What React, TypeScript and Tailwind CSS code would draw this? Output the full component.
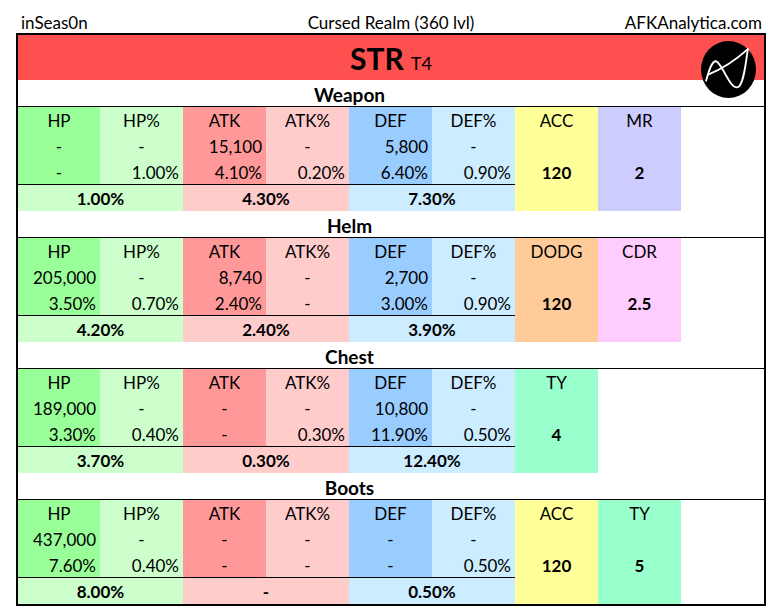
import React from "react";

type Extra = { label: string; value: string; bg: string };
type Section = {
  name: string;
  cols: string[][];
  sums: string[];
  extras: Extra[];
};

const colHeads = ["HP", "HP%", "ATK", "ATK%", "DEF", "DEF%"];
const colBgs = [
  "bg-[#99ff99]",
  "bg-[#ccffcc]",
  "bg-[#ff9999]",
  "bg-[#ffcccc]",
  "bg-[#99ccff]",
  "bg-[#ccecff]",
];
const sumBgs = ["bg-[#ccffcc]", "bg-[#ffcccc]", "bg-[#ccecff]"];

const sections: Section[] = [
  {
    name: "Weapon",
    cols: [
      ["-", "-"],
      ["-", "1.00%"],
      ["15,100", "4.10%"],
      ["-", "0.20%"],
      ["5,800", "6.40%"],
      ["-", "0.90%"],
    ],
    sums: ["1.00%", "4.30%", "7.30%"],
    extras: [
      { label: "ACC", value: "120", bg: "bg-[#ffff99]" },
      { label: "MR", value: "2", bg: "bg-[#ccccff]" },
    ],
  },
  {
    name: "Helm",
    cols: [
      ["205,000", "3.50%"],
      ["-", "0.70%"],
      ["8,740", "2.40%"],
      ["-", "-"],
      ["2,700", "3.00%"],
      ["-", "0.90%"],
    ],
    sums: ["4.20%", "2.40%", "3.90%"],
    extras: [
      { label: "DODG", value: "120", bg: "bg-[#ffcc99]" },
      { label: "CDR", value: "2.5", bg: "bg-[#ffccff]" },
    ],
  },
  {
    name: "Chest",
    cols: [
      ["189,000", "3.30%"],
      ["-", "0.40%"],
      ["-", "-"],
      ["-", "0.30%"],
      ["10,800", "11.90%"],
      ["-", "0.50%"],
    ],
    sums: ["3.70%", "0.30%", "12.40%"],
    extras: [{ label: "TY", value: "4", bg: "bg-[#99ffcc]" }],
  },
  {
    name: "Boots",
    cols: [
      ["437,000", "7.60%"],
      ["-", "0.40%"],
      ["-", "-"],
      ["-", "-"],
      ["-", "-"],
      ["-", "0.50%"],
    ],
    sums: ["8.00%", "-", "0.50%"],
    extras: [
      { label: "ACC", value: "120", bg: "bg-[#ffff99]" },
      { label: "TY", value: "5", bg: "bg-[#99ffcc]" },
    ],
  },
];

function Cell({ v, last }: { v: string; last?: boolean }) {
  return (
    <div
      className={
        "h-[26px] leading-[28px] " +
        (v === "-" ? "text-center " : "text-right pr-[4px] ") +
        (last ? "border-b border-black" : "")
      }
    >
      {v}
    </div>
  );
}

// site logo: black disc with a white looping stroke
function Logo() {
  return (
    <svg width="55" height="57" viewBox="0 0 54 56" className="absolute left-[683px] top-[6px]">
      <ellipse cx="27" cy="28" rx="27" ry="28" fill="#000" />
      <path
        d="M5 39 C 8 28, 11 19, 15 20 C 21 22, 29 50, 37 45 C 42 41, 44 22, 46 8"
        fill="none"
        stroke="#fff"
        strokeWidth="1.8"
        strokeLinecap="round"
      />
      <path
        d="M46 8 C 36 17, 22 27, 7 33"
        fill="none"
        stroke="#fff"
        strokeWidth="1.8"
        strokeLinecap="round"
      />
    </svg>
  );
}

function SectionBlock({ s }: { s: Section }) {
  return (
    <div>
      <div className="h-[27px] border-b border-black">
        <div className="w-[663px] text-center font-bold text-[19px] leading-[29px]">
          {s.name}
        </div>
      </div>
      <div className="flex h-[104px]">
        <div className="w-[497px] flex flex-col">
          <div className="flex">
            {s.cols.map((c, i) => (
              <div
                key={i}
                className={(i === 0 ? "w-[82px] " : "w-[83px] ") + colBgs[i]}
              >
                <div className="h-[26px] leading-[28px] text-center">{colHeads[i]}</div>
                <Cell v={c[0]} />
                <Cell v={c[1]} last />
              </div>
            ))}
          </div>
          <div className="flex h-[26px] font-bold">
            {s.sums.map((v, i) => (
              <div
                key={i}
                className={
                  (i === 0 ? "w-[165px] " : "w-[166px] ") +
                  sumBgs[i] +
                  " text-center leading-[28px]"
                }
              >
                {v}
              </div>
            ))}
          </div>
        </div>
        {s.extras.map((e, i) => (
          <div key={i} className={"w-[83px] h-[104px] text-center " + e.bg}>
            <div className="h-[26px] leading-[28px]">{e.label}</div>
            <div className="h-[26px]" />
            <div className="h-[26px] leading-[28px] font-bold">{e.value}</div>
          </div>
        ))}
      </div>
    </div>
  );
}

export default function App() {
  return (
    <div className="w-[782px] h-[615px] bg-white text-black font-['Lato',sans-serif] text-[17px]">
      <div className="ml-[16px] w-[750px]">
        <div className="h-[33px] grid grid-cols-3 items-end text-[17px] leading-[20px]">
          <div className="pl-[5px]">inSeas0n</div>
          <div className="text-center whitespace-nowrap">Cursed Realm (360 lvl)</div>
          <div className="text-right pr-[4px]">AFKAnalytica.com</div>
        </div>
        <div className="relative border-2 border-black">
          <div className="h-[45px] bg-[#ff5050] flex items-baseline justify-center leading-[46px]">
            <span className="text-[30px] font-bold">STR</span>
            <span className="text-[18px] ml-[7px]">T4</span>
          </div>
          {sections.map((s) => (
            <SectionBlock key={s.name} s={s} />
          ))}
          <Logo />
        </div>
      </div>
    </div>
  );
}
